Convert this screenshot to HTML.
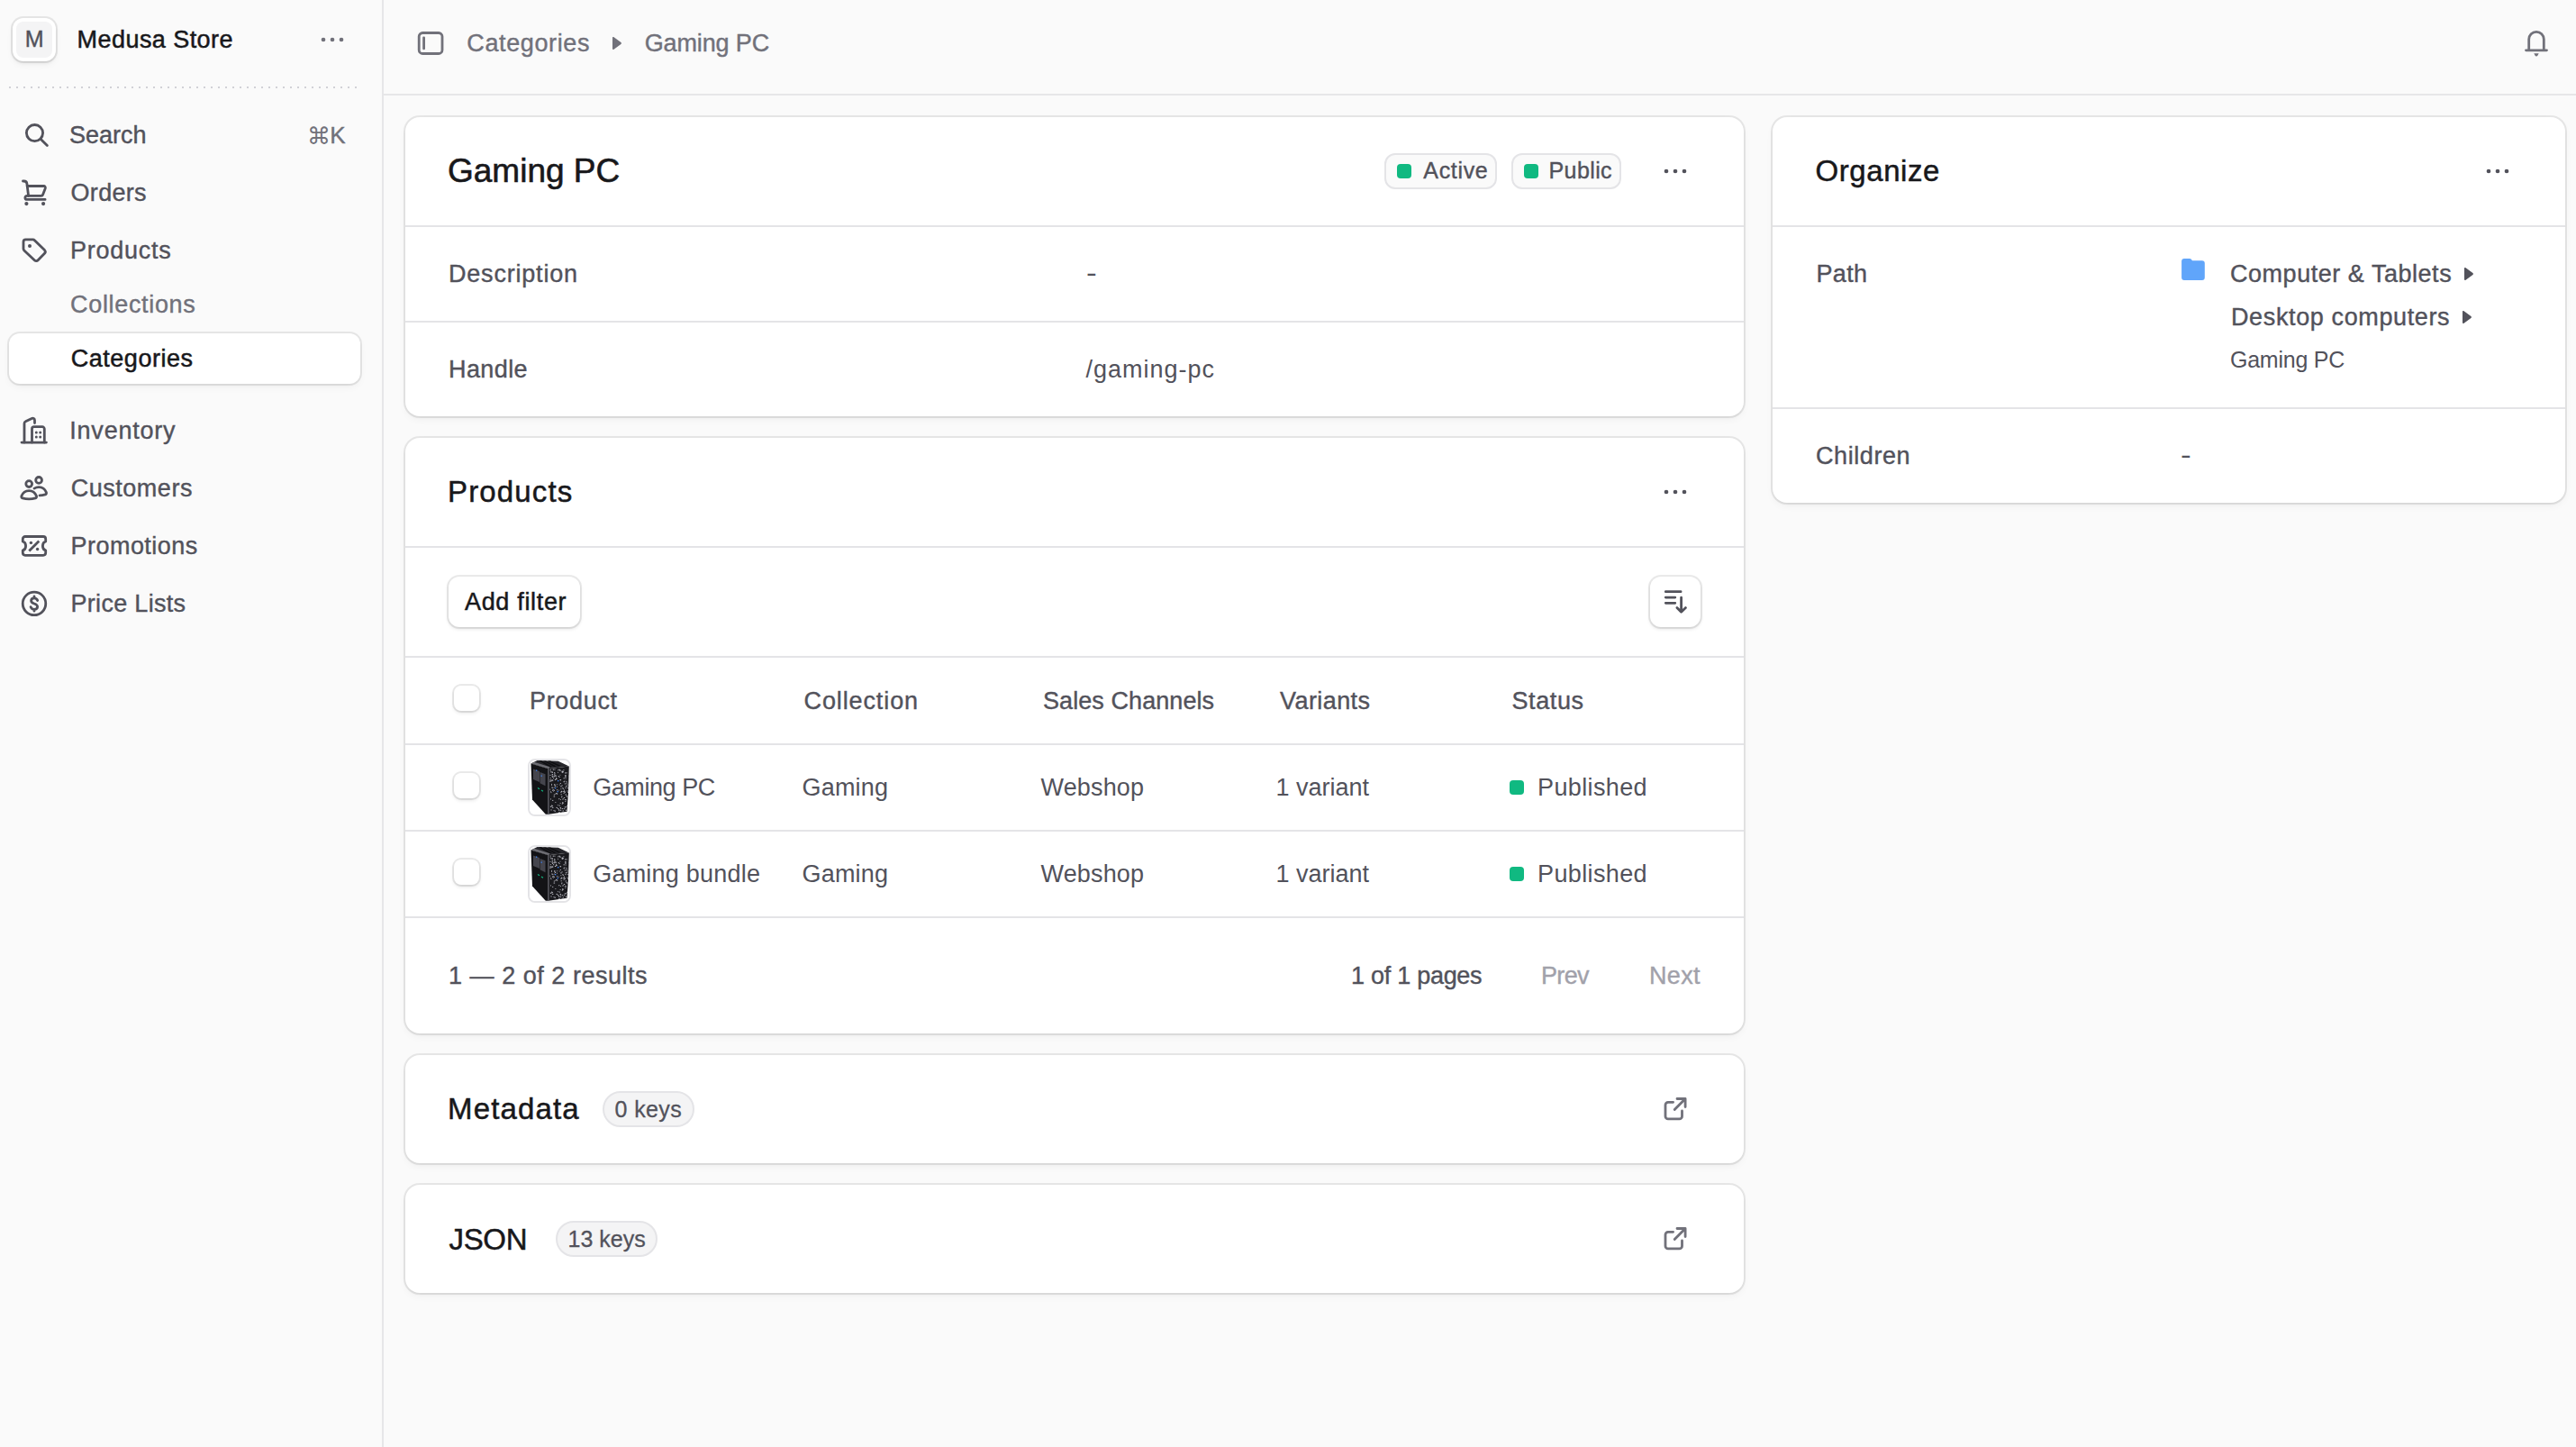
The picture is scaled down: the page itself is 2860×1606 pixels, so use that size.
<!DOCTYPE html>
<html lang="en"><head><meta charset="utf-8"><title>Gaming PC - Categories - Medusa Store</title><meta name="viewport" content="width=2860"><style>
*{box-sizing:border-box;margin:0;padding:0}
html,body{width:2860px;height:1606px;overflow:hidden;background:#fafafa}
body{font-family:"Liberation Sans","DejaVu Sans",sans-serif;position:relative;-webkit-font-smoothing:antialiased}
a{text-decoration:none;color:inherit;display:block}
.t{position:absolute;white-space:pre;display:block}
.ic,.pc{position:absolute;display:block;overflow:visible}
i.sq{position:absolute;width:16px;height:16px;border-radius:4px;background:#10b981}
.sidebar{position:absolute;left:0;top:0;width:426px;height:1606px;border-right:2px solid #e6e6e8;background:#fafafa}
.sidebar div,.sidebar a,.sidebar nav{position:static}
.sidebar .avatar{position:absolute;background:#fff;border-radius:12px;box-shadow:0 0 0 2px rgba(0,0,0,.08),0 2px 4px -1px rgba(0,0,0,.12),0 4px 8px rgba(0,0,0,.04)}
.sidebar .avatar-in{position:absolute;left:4px;top:4px;width:40px;height:40px;border-radius:8px;background:#f4f4f5}
.dots{position:absolute!important;left:10px;top:96px;width:386px;height:2px;background-image:linear-gradient(90deg,#d1d1d6 2px,transparent 2px);background-size:8px 2px}
.sidebar a.active{position:absolute;background:#fff;border-radius:12px;box-shadow:0 0 0 2px rgba(0,0,0,.08),0 2px 4px -2px rgba(0,0,0,.08),0 4px 8px rgba(0,0,0,.04)}
.topbar{position:static;display:block}
.topbar::after{content:"";position:absolute;left:426px;top:104px;width:2434px;height:2px;background:#e6e6e8}
main{position:static}
.card{position:absolute;background:#fff;border-radius:16px;box-shadow:0 0 0 2px rgba(0,0,0,.08),0 2px 4px -2px rgba(0,0,0,.08),0 4px 8px rgba(0,0,0,.04)}
.row{position:absolute;left:0;width:100%;top:0;border-bottom:2px solid #e4e4e7;box-sizing:content-box}
.badge{position:absolute;border:2px solid #e4e4e7;background:#fafafa;border-radius:12px}
.pill{position:absolute;border:2px solid #e4e4e7;background:#f4f4f5;border-radius:20px}
.btn{position:absolute;background:#fff;border-radius:12px;box-shadow:0 0 0 2px rgba(0,0,0,.08),0 2px 4px rgba(0,0,0,.12)}
.cb{position:absolute;background:#fff;border-radius:8px;box-shadow:0 0 0 2px rgba(0,0,0,.08),0 2px 4px rgba(0,0,0,.12)}
.thumb{position:absolute;border:2px solid #e4e4e7;border-radius:8px;overflow:hidden;background:#fff}
.thumb .pc{left:0;top:0}
@media (max-width:1500px){html{width:1430px;height:803px}body{zoom:.5}}
</style></head><body>
<aside class="sidebar">
<div class="store">
<div class="avatar" style="left:14px;top:20px;width:48px;height:48px;"><div class="avatar-in"></div></div>
<span class="t" id="t1" style="left:27.80px;top:26.20px;font-size:25px;line-height:35px;color:#52525b;letter-spacing:0.000px;-webkit-text-stroke:0.4px #52525b;">M</span>
<span class="t" id="t2" style="left:85.60px;top:24.80px;font-size:27px;line-height:38px;color:#18181b;letter-spacing:0.439px;-webkit-text-stroke:0.5px #18181b;">Medusa Store</span>
<svg class="ic" style="left:354px;top:29px;color:#71717a" width="30" height="30" viewBox="0 0 30 30" fill="none" stroke="currentColor" stroke-width="2.8" stroke-linecap="round" stroke-linejoin="round"><circle cx="5" cy="15" r="2.35" fill="currentColor" stroke="none"/><circle cx="15" cy="15" r="2.35" fill="currentColor" stroke="none"/><circle cx="25" cy="15" r="2.35" fill="currentColor" stroke="none"/></svg>
</div>
<div class="dots"></div>
<nav>
<div class="navrow">
<svg class="ic" style="left:20px;top:130px;color:#52525b" width="40" height="40" viewBox="0 0 40 40" fill="none" stroke="currentColor" stroke-width="2.8" stroke-linecap="round" stroke-linejoin="round"><circle cx="18.5" cy="17.6" r="9.1"/><path d="M25.3 24.4 32.4 31.5"/></svg>
<span class="t" id="t3" style="left:77.00px;top:130.80px;font-size:27px;line-height:38px;color:#52525b;letter-spacing:0.000px;-webkit-text-stroke:0.4px #52525b;">Search</span>
<span class="t" id="t4" style="left:340.90px;top:132.80px;font-size:26px;line-height:36px;color:#71717a;letter-spacing:0.000px;font-family:'DejaVu Sans',sans-serif;">⌘</span>
<span class="t" id="t5" style="left:366.20px;top:131.80px;font-size:26px;line-height:36px;color:#71717a;letter-spacing:0.000px;-webkit-text-stroke:0.4px #71717a;">K</span>
</div>
<a class="navrow">
<svg class="ic" style="left:20px;top:194px;color:#52525b" width="40" height="40" viewBox="0 0 40 40" fill="none" stroke="currentColor" stroke-width="2.8" stroke-linecap="round" stroke-linejoin="round"><path d="M5.5 7h1.2a3.2 3.2 0 0 1 3.2 2.8L11.6 23.4"/><path d="M10.2 12.5H28.6a1.8 1.8 0 0 1 1.7 2.4L27.6 22a2 2 0 0 1-1.9 1.4H9.9a2 2 0 0 0 0 4H30.1"/><circle cx="9.4" cy="32.1" r="2.1" fill="currentColor" stroke="none"/><circle cx="28.1" cy="32.1" r="2.1" fill="currentColor" stroke="none"/></svg>
<span class="t" id="t6" style="left:78.50px;top:194.80px;font-size:27px;line-height:38px;color:#52525b;letter-spacing:0.320px;-webkit-text-stroke:0.4px #52525b;">Orders</span>
</a>
<a class="navrow">
<svg class="ic" style="left:20px;top:258px;color:#52525b" width="40" height="40" viewBox="0 0 40 40" fill="none" stroke="currentColor" stroke-width="2.8" stroke-linecap="round" stroke-linejoin="round"><path d="M6 10.4a2.5 2.5 0 0 1 2.5-2.5h8.1a2.5 2.5 0 0 1 1.8.75L29.5 19.6a2.6 2.6 0 0 1 0 3.6l-7.3 7.6a2.6 2.6 0 0 1-3.7.1L6.8 19.9a2.5 2.5 0 0 1-.8-1.8z"/><circle cx="13" cy="15" r="2" fill="currentColor" stroke="none"/></svg>
<span class="t" id="t7" style="left:77.90px;top:258.80px;font-size:27px;line-height:38px;color:#52525b;letter-spacing:0.772px;-webkit-text-stroke:0.4px #52525b;">Products</span>
</a>
<a class="navrow"><span class="t" id="t8" style="left:78.10px;top:318.80px;font-size:27px;line-height:38px;color:#71717a;letter-spacing:0.660px;-webkit-text-stroke:0.4px #71717a;">Collections</span></a>
<a class="active" style="left:10px;top:370px;width:390px;height:56px;"><span class="t" id="t9" style="left:68.70px;top:8.80px;font-size:27px;line-height:38px;color:#18181b;letter-spacing:0.534px;-webkit-text-stroke:0.5px #18181b;">Categories</span></a>
<a class="navrow">
<svg class="ic" style="left:20px;top:458px;color:#52525b" width="40" height="40" viewBox="0 0 40 40" fill="none" stroke="currentColor" stroke-width="2.8" stroke-linecap="round" stroke-linejoin="round"><path d="M4 33.1H31.4"/><path d="M7 33.1V12a2.4 2.4 0 0 1 1.4-2.2l6.8-3.4a2.3 2.3 0 0 1 3.3 2.1v3.1"/><path d="M15.5 33.1V18a2.3 2.3 0 0 1 2.3-2.3H27a2.3 2.3 0 0 1 2.3 2.3V33.1"/><circle cx="20.3" cy="21.9" r="1.5" fill="currentColor" stroke="none"/><circle cx="24.7" cy="21.9" r="1.5" fill="currentColor" stroke="none"/><circle cx="20.3" cy="27" r="1.5" fill="currentColor" stroke="none"/><circle cx="24.7" cy="27" r="1.5" fill="currentColor" stroke="none"/></svg>
<span class="t" id="t10" style="left:77.30px;top:458.80px;font-size:27px;line-height:38px;color:#52525b;letter-spacing:0.775px;-webkit-text-stroke:0.4px #52525b;">Inventory</span>
</a>
<a class="navrow">
<svg class="ic" style="left:20px;top:523px;color:#52525b" width="40" height="40" viewBox="0 0 40 40" fill="none" stroke="currentColor" stroke-width="2.8" stroke-linecap="round" stroke-linejoin="round"><circle cx="12.2" cy="14.1" r="3.4"/><circle cx="23.1" cy="9.9" r="3.4"/><path d="M12.2 21.6c-3.9 0-7 2.6-8.3 6-.4 1 .2 2 1.2 2.3 2 .6 4.4 1 7.1 1s5.1-.4 7.1-1c1-.3 1.6-1.3 1.2-2.3-1.300-3.400-4.400-6-8.300-6z"/><path d="M18 19.1c1.500-.900 3.200-1.500 5.100-1.500 3.900 0 7 2.600 8.300 6 .4 1-.2 2-1.200 2.300-1.800.5-3.800.9-6.200 1"/></svg>
<span class="t" id="t11" style="left:78.70px;top:522.80px;font-size:27px;line-height:38px;color:#52525b;letter-spacing:0.526px;-webkit-text-stroke:0.4px #52525b;">Customers</span>
</a>
<a class="navrow">
<svg class="ic" style="left:20px;top:587px;color:#52525b" width="40" height="40" viewBox="0 0 40 40" fill="none" stroke="currentColor" stroke-width="2.8" stroke-linecap="round" stroke-linejoin="round"><path d="M8 8.500H28a2.700 2.700 0 0 1 2.700 2.700V14c-2.500.6-3.300 2.800-3.300 4.900s.8 4.300 3.300 4.900v2.800a2.700 2.700 0 0 1-2.700 2.700H8a2.700 2.700 0 0 1-2.700-2.700V23.800c2.500-.6 3.300-2.800 3.300-4.900s-.8-4.300-3.300-4.900V11.200A2.700 2.700 0 0 1 8 8.500z"/><path d="M13.300 23.400 22.300 14.400" stroke-linecap="square"/><circle cx="14.400" cy="15.400" r="1.700" fill="currentColor" stroke="none"/><circle cx="21.600" cy="22.500" r="1.700" fill="currentColor" stroke="none"/></svg>
<span class="t" id="t12" style="left:78.50px;top:586.80px;font-size:27px;line-height:38px;color:#52525b;letter-spacing:0.468px;-webkit-text-stroke:0.4px #52525b;">Promotions</span>
</a>
<a class="navrow">
<svg class="ic" style="left:20px;top:651px;color:#52525b" width="40" height="40" viewBox="0 0 40 40" fill="none" stroke="currentColor" stroke-width="2.8" stroke-linecap="round" stroke-linejoin="round"><circle cx="18" cy="18.900" r="12.750"/><path d="M21.700 15.500c-.6-1.700-2-2.600-3.700-2.600-2 0-3.400 1.200-3.400 2.900 0 1.900 1.500 2.600 3.400 3.200s3.600 1.300 3.600 3.300c0 1.800-1.500 3-3.600 3-1.800 0-3.300-.9-3.900-2.700M18 11v1.900M18 25.300v1.900"/></svg>
<span class="t" id="t13" style="left:78.50px;top:650.80px;font-size:27px;line-height:38px;color:#52525b;letter-spacing:0.300px;-webkit-text-stroke:0.4px #52525b;">Price Lists</span>
</a>
</nav>
</aside>
<header class="topbar">
<svg class="ic" style="left:460px;top:30px;color:#71717a" width="36" height="36" viewBox="0 0 36 36" fill="none" stroke="currentColor" stroke-width="2.8" stroke-linecap="round" stroke-linejoin="round"><rect x="5.200" y="6.500" width="25.800" height="23" rx="4"/><path d="M10.600 11.800V23.900"/></svg>
<span class="t" id="t14" style="left:518.30px;top:28.80px;font-size:27px;line-height:38px;color:#71717a;letter-spacing:0.621px;-webkit-text-stroke:0.4px #71717a;">Categories</span>
<svg class="ic" style="left:680px;top:39.8px;color:#71717a" width="11" height="16" viewBox="0 0 11 16" fill="none" stroke="currentColor" stroke-width="2.8" stroke-linecap="round" stroke-linejoin="round"><path d="M1.6 1.2 9.4 7.1a1.1 1.1 0 0 1 0 1.800L1.600 14.800A1 1 0 0 1 0 14V2A1 1 0 0 1 1.600 1.200z" fill="currentColor" stroke="none"/></svg>
<span class="t" id="t15" style="left:715.70px;top:28.80px;font-size:27px;line-height:38px;color:#71717a;letter-spacing:-0.126px;-webkit-text-stroke:0.4px #71717a;">Gaming PC</span>
<svg class="ic" style="left:2796px;top:28px;color:#71717a" width="40" height="40" viewBox="0 0 40 40" fill="none" stroke="currentColor" stroke-width="2.8" stroke-linecap="round" stroke-linejoin="round"><path d="M8.500 27.800H31.500M11.700 27.800V15.600a8.300 8.300 0 0 1 16.600 0V27.800"/><path d="M17.300 31.300h5.400l-1.200 2.200a1.700 1.700 0 0 1-3 0z" fill="currentColor" stroke="none"/></svg>
</header>
<main>
<section class="card" style="left:450px;top:130px;width:1486px;height:332px">
<div class="row hd" style="height:120px">
<span class="t" id="t16" style="left:47.00px;top:34.30px;font-size:37px;line-height:52px;color:#18181b;letter-spacing:0.000px;-webkit-text-stroke:0.6px #18181b;">Gaming PC</span>
<div class="badge" style="left:1087px;top:40px;width:125px;height:40px;"><i class="sq" style="left:12px;top:10px"></i><span class="t" id="t17" style="left:41.30px;top:0.10px;font-size:25px;line-height:35px;color:#52525b;letter-spacing:0.680px;-webkit-text-stroke:0.4px #52525b;">Active</span></div>
<div class="badge" style="left:1228px;top:40px;width:121.5px;height:40px;"><i class="sq" style="left:12px;top:10px"></i><span class="t" id="t18" style="left:39.50px;top:0.10px;font-size:25px;line-height:35px;color:#52525b;letter-spacing:0.400px;-webkit-text-stroke:0.4px #52525b;">Public</span></div>
<svg class="ic" style="left:1395px;top:45px;color:#52525b" width="30" height="30" viewBox="0 0 30 30" fill="none" stroke="currentColor" stroke-width="2.8" stroke-linecap="round" stroke-linejoin="round"><circle cx="5" cy="15" r="2.35" fill="currentColor" stroke="none"/><circle cx="15" cy="15" r="2.35" fill="currentColor" stroke="none"/><circle cx="25" cy="15" r="2.35" fill="currentColor" stroke="none"/></svg>
</div>
<div class="row" style="top:122px;height:104px">
<span class="t" id="t19" style="left:48.00px;top:32.80px;font-size:27px;line-height:38px;color:#52525b;letter-spacing:0.800px;-webkit-text-stroke:0.4px #52525b;">Description</span>
<span class="t" id="t20" style="left:755.70px;top:32.30px;font-size:27px;line-height:38px;color:#52525b;letter-spacing:0.000px;transform:scaleX(1.3);transform-origin:0 50%;">-</span>
</div>
<div class="row" style="top:228px;height:104px;border-bottom:0">
<span class="t" id="t21" style="left:48.00px;top:32.80px;font-size:27px;line-height:38px;color:#52525b;letter-spacing:0.400px;-webkit-text-stroke:0.4px #52525b;">Handle</span>
<span class="t" id="t22" style="left:755.50px;top:32.80px;font-size:27px;line-height:38px;color:#52525b;letter-spacing:1.000px;">/gaming-pc</span>
</div>
</section>
<section class="card" style="left:450px;top:486px;width:1486px;height:661px">
<div class="row hd" style="height:120px">
<span class="t" id="t23" style="left:47.00px;top:36.80px;font-size:33px;line-height:46px;color:#18181b;letter-spacing:1.143px;-webkit-text-stroke:0.5px #18181b;">Products</span>
<svg class="ic" style="left:1395px;top:44.5px;color:#52525b" width="30" height="30" viewBox="0 0 30 30" fill="none" stroke="currentColor" stroke-width="2.8" stroke-linecap="round" stroke-linejoin="round"><circle cx="5" cy="15" r="2.35" fill="currentColor" stroke="none"/><circle cx="15" cy="15" r="2.35" fill="currentColor" stroke="none"/><circle cx="25" cy="15" r="2.35" fill="currentColor" stroke="none"/></svg>
</div>
<div class="row" style="top:122px;height:120px">
<div class="btn" style="left:48px;top:32px;width:146px;height:56px;"><span class="t" id="t24" style="left:18.00px;top:8.80px;font-size:27px;line-height:38px;color:#18181b;letter-spacing:0.667px;-webkit-text-stroke:0.5px #18181b;">Add filter</span></div>
<div class="btn" style="left:1382px;top:32px;width:56px;height:56px;"><svg class="ic" style="left:13px;top:13px;color:#52525b" width="30" height="30" viewBox="0 0 30 30" fill="none" stroke="currentColor" stroke-width="2.8" stroke-linecap="round" stroke-linejoin="round"><path d="M4.300 3.700H21.100M4.300 10.100H14.800M4.300 16.300H14.800M21.600 10.200V26.200M16.900 21.600l4.700 4.700 4.900-4.700"/></svg></div>
</div>
<div class="row th" style="top:244px;height:95px">
<div class="cb" style="left:54px;top:31px;width:28px;height:28px;"></div>
<span class="t" id="t25" style="left:138.00px;top:28.80px;font-size:27px;line-height:38px;color:#52525b;letter-spacing:0.667px;-webkit-text-stroke:0.4px #52525b;">Product</span>
<span class="t" id="t26" style="left:442.50px;top:28.80px;font-size:27px;line-height:38px;color:#52525b;letter-spacing:0.889px;-webkit-text-stroke:0.4px #52525b;">Collection</span>
<span class="t" id="t27" style="left:708.00px;top:28.80px;font-size:27px;line-height:38px;color:#52525b;letter-spacing:0.077px;-webkit-text-stroke:0.4px #52525b;">Sales Channels</span>
<span class="t" id="t28" style="left:971.00px;top:28.80px;font-size:27px;line-height:38px;color:#52525b;letter-spacing:0.429px;-webkit-text-stroke:0.4px #52525b;">Variants</span>
<span class="t" id="t29" style="left:1228.50px;top:28.80px;font-size:27px;line-height:38px;color:#52525b;letter-spacing:0.600px;-webkit-text-stroke:0.4px #52525b;">Status</span>
</div>
<div class="row tr" style="top:341px;height:94px">
<div class="cb" style="left:54px;top:31px;width:28px;height:28px;"></div>
<div class="thumb" style="left:136px;top:15px;width:48px;height:64px;"><svg class="pc" width="44" height="60" viewBox="0 0 44 60"><rect width="44" height="60" fill="#fff"/><path d="M1.500 3.500 8.500 0 31.800.8 43.800 6.600 20.900 9.300z" fill="#26262b"/><path d="M10 .3l3 0 12 6.500-3 .4zM15 .4l3 .1 12 6-3 .4zM20 .5l3 .1 12 5.500-3 .4z" fill="#0e0e11"/><path d="M1.500 3.500 5 1.700 22.600 7.300 20.900 9.300z" fill="#6e6e74"/><path d="M1.500 3.500 20.900 9.300V59.800H17.800L3 43.500z" fill="#131316"/><path d="M20.900 9.300 43.800 6.600 43 35.700 41.500 56.700 20.900 59.800z" fill="#1a1a1e"/><path d="M20.900 9.300V59.800" stroke="#5c5c63" stroke-width="1.400"/><path d="M4 9.500l7 2.500v12l-7-3zM11.500 13l6 2.200v13l-6-3z" fill="#45454d"/><path d="M9 30.500l2 1.200M13 33l2 1.200" stroke="#10b981" stroke-width="1.200"/><clipPath id="pcf0"><path d="M21.600 9.200 43.800 6.600 43 35.700 41.500 56.700 21.600 59.700z"/></clipPath><g fill="#c4c4cc" clip-path="url(#pcf0)"><rect x="28.8" y="16.7" width="1.2" height=".9"/><rect x="23.4" y="35.2" width="1.0" height=".9"/><rect x="23.0" y="33.9" width="0.7" height=".9"/><rect x="31.1" y="12.9" width="0.8" height=".9"/><rect x="30.9" y="49.2" width="0.8" height=".9"/><rect x="26.6" y="39.6" width="1.5" height=".9"/><rect x="34.2" y="28.5" width="1.5" height=".9"/><rect x="22.8" y="50.7" width="0.9" height=".9"/><rect x="24.9" y="15.2" width="0.9" height=".9"/><rect x="39.3" y="18.2" width="1.2" height=".9"/><rect x="35.5" y="27.4" width="1.1" height=".9"/><rect x="23.1" y="12.4" width="0.9" height=".9"/><rect x="36.4" y="30.0" width="1.0" height=".9"/><rect x="34.4" y="31.3" width="0.9" height=".9"/><rect x="38.9" y="43.1" width="0.9" height=".9"/><rect x="34.2" y="34.7" width="1.4" height=".9"/><rect x="37.5" y="23.3" width="1.5" height=".9"/><rect x="24.3" y="29.6" width="1.3" height=".9"/><rect x="25.1" y="33.0" width="0.7" height=".9"/><rect x="36.2" y="46.2" width="1.2" height=".9"/><rect x="40.6" y="24.6" width="1.3" height=".9"/><rect x="34.6" y="37.3" width="1.1" height=".9"/><rect x="39.9" y="54.8" width="1.1" height=".9"/><rect x="36.1" y="12.4" width="1.3" height=".9"/><rect x="35.7" y="57.2" width="1.4" height=".9"/><rect x="27.9" y="28.0" width="1.2" height=".9"/><rect x="22.3" y="31.7" width="0.8" height=".9"/><rect x="24.3" y="12.3" width="1.3" height=".9"/><rect x="24.6" y="21.4" width="1.0" height=".9"/><rect x="40.5" y="13.4" width="1.1" height=".9"/><rect x="33.6" y="51.9" width="1.4" height=".9"/><rect x="40.4" y="22.9" width="1.0" height=".9"/><rect x="29.5" y="51.9" width="1.5" height=".9"/><rect x="25.0" y="18.0" width="0.9" height=".9"/><rect x="26.8" y="32.8" width="1.2" height=".9"/><rect x="27.4" y="9.7" width="1.0" height=".9"/><rect x="29.7" y="36.7" width="1.5" height=".9"/><rect x="36.6" y="34.2" width="1.2" height=".9"/><rect x="36.3" y="12.1" width="1.4" height=".9"/><rect x="38.6" y="51.5" width="1.3" height=".9"/><rect x="30.2" y="28.7" width="0.8" height=".9"/><rect x="35.4" y="12.5" width="0.8" height=".9"/><rect x="26.3" y="17.3" width="1.0" height=".9"/><rect x="22.9" y="9.5" width="0.8" height=".9"/><rect x="24.0" y="27.0" width="0.7" height=".9"/><rect x="40.6" y="39.0" width="0.8" height=".9"/><rect x="27.2" y="26.2" width="1.0" height=".9"/><rect x="24.4" y="50.2" width="1.5" height=".9"/><rect x="31.8" y="32.7" width="0.8" height=".9"/><rect x="24.0" y="25.9" width="0.9" height=".9"/><rect x="39.6" y="17.2" width="0.7" height=".9"/><rect x="42.2" y="34.9" width="0.8" height=".9"/><rect x="33.5" y="10.8" width="1.1" height=".9"/><rect x="42.8" y="50.9" width="1.3" height=".9"/><rect x="27.4" y="27.1" width="0.8" height=".9"/><rect x="38.4" y="35.1" width="1.3" height=".9"/><rect x="28.9" y="20.2" width="1.3" height=".9"/><rect x="43.0" y="50.4" width="1.3" height=".9"/><rect x="39.4" y="45.0" width="0.9" height=".9"/><rect x="32.9" y="26.6" width="0.7" height=".9"/><rect x="22.4" y="22.9" width="0.9" height=".9"/><rect x="36.7" y="55.4" width="1.1" height=".9"/><rect x="41.9" y="56.9" width="1.5" height=".9"/><rect x="29.6" y="20.1" width="0.9" height=".9"/><rect x="26.0" y="19.3" width="1.2" height=".9"/><rect x="41.2" y="49.8" width="1.1" height=".9"/><rect x="35.8" y="47.9" width="0.8" height=".9"/><rect x="36.0" y="53.2" width="1.3" height=".9"/><rect x="37.9" y="32.4" width="0.8" height=".9"/><rect x="38.8" y="25.5" width="1.3" height=".9"/><rect x="42.7" y="28.5" width="1.0" height=".9"/><rect x="42.2" y="44.3" width="0.8" height=".9"/><rect x="24.5" y="16.8" width="1.4" height=".9"/><rect x="39.1" y="16.5" width="1.4" height=".9"/><rect x="42.9" y="41.0" width="1.0" height=".9"/><rect x="33.6" y="15.8" width="0.7" height=".9"/><rect x="42.7" y="40.7" width="1.1" height=".9"/><rect x="41.9" y="30.3" width="1.4" height=".9"/><rect x="39.6" y="19.6" width="0.9" height=".9"/><rect x="28.1" y="21.0" width="1.2" height=".9"/><rect x="27.4" y="29.6" width="0.8" height=".9"/><rect x="41.4" y="26.5" width="1.1" height=".9"/><rect x="34.3" y="52.9" width="1.0" height=".9"/><rect x="41.5" y="33.6" width="1.1" height=".9"/><rect x="33.1" y="10.4" width="1.1" height=".9"/><rect x="25.7" y="9.7" width="1.3" height=".9"/><rect x="25.5" y="32.2" width="1.3" height=".9"/><rect x="33.8" y="25.1" width="1.1" height=".9"/><rect x="33.7" y="47.1" width="0.8" height=".9"/><rect x="33.8" y="21.4" width="0.9" height=".9"/><rect x="38.4" y="33.9" width="1.1" height=".9"/><rect x="38.1" y="53.3" width="1.1" height=".9"/><rect x="35.0" y="33.8" width="1.1" height=".9"/><rect x="36.7" y="31.2" width="1.1" height=".9"/><rect x="32.1" y="54.7" width="1.3" height=".9"/><rect x="40.6" y="54.7" width="0.9" height=".9"/><rect x="33.8" y="54.8" width="1.4" height=".9"/><rect x="24.7" y="15.3" width="1.1" height=".9"/><rect x="23.4" y="21.1" width="0.8" height=".9"/><rect x="36.2" y="47.1" width="1.4" height=".9"/><rect x="25.1" y="43.9" width="1.2" height=".9"/><rect x="24.9" y="51.9" width="1.5" height=".9"/><rect x="26.5" y="55.2" width="1.0" height=".9"/><rect x="32.3" y="57.0" width="1.4" height=".9"/><rect x="25.3" y="30.2" width="1.1" height=".9"/><rect x="29.1" y="18.9" width="1.0" height=".9"/><rect x="37.3" y="10.4" width="1.1" height=".9"/><rect x="31.3" y="10.4" width="1.0" height=".9"/><rect x="35.2" y="34.1" width="0.8" height=".9"/><rect x="43.0" y="47.3" width="1.5" height=".9"/><rect x="24.1" y="22.2" width="0.7" height=".9"/><rect x="38.5" y="22.5" width="0.8" height=".9"/><rect x="30.9" y="53.2" width="1.4" height=".9"/><rect x="27.4" y="16.7" width="1.4" height=".9"/><rect x="34.1" y="43.1" width="0.8" height=".9"/><rect x="23.0" y="42.5" width="1.0" height=".9"/><rect x="23.4" y="54.5" width="1.2" height=".9"/><rect x="39.0" y="13.5" width="1.4" height=".9"/><rect x="23.2" y="50.9" width="1.1" height=".9"/><rect x="29.1" y="36.0" width="1.4" height=".9"/><rect x="27.6" y="15.7" width="1.1" height=".9"/><rect x="26.9" y="14.8" width="0.8" height=".9"/><rect x="22.9" y="19.2" width="0.9" height=".9"/><rect x="28.4" y="46.0" width="0.9" height=".9"/><rect x="32.6" y="18.0" width="1.0" height=".9"/><rect x="22.2" y="21.5" width="0.7" height=".9"/><rect x="37.6" y="36.0" width="0.9" height=".9"/><rect x="32.0" y="54.4" width="0.8" height=".9"/><rect x="39.4" y="30.2" width="1.1" height=".9"/><rect x="39.7" y="28.4" width="1.1" height=".9"/><rect x="36.6" y="56.7" width="1.0" height=".9"/><rect x="39.7" y="43.4" width="1.2" height=".9"/><rect x="30.5" y="26.2" width="0.7" height=".9"/><rect x="24.6" y="12.9" width="1.3" height=".9"/><rect x="27.3" y="17.3" width="0.8" height=".9"/><rect x="39.9" y="51.3" width="1.2" height=".9"/><rect x="27.9" y="21.1" width="0.9" height=".9"/><rect x="31.7" y="17.1" width="1.1" height=".9"/><rect x="27.5" y="55.7" width="1.5" height=".9"/><rect x="33.6" y="21.2" width="1.5" height=".9"/><rect x="28.5" y="26.6" width="0.7" height=".9"/><rect x="30.0" y="32.3" width="1.1" height=".9"/><rect x="26.1" y="33.7" width="0.7" height=".9"/><rect x="27.5" y="13.8" width="1.0" height=".9"/><rect x="22.7" y="10.6" width="0.9" height=".9"/><rect x="26.8" y="37.6" width="1.1" height=".9"/><rect x="37.9" y="41.1" width="1.3" height=".9"/><rect x="40.7" y="28.2" width="1.0" height=".9"/><rect x="43.0" y="16.7" width="1.3" height=".9"/><rect x="35.6" y="11.6" width="1.4" height=".9"/><rect x="41.0" y="39.6" width="1.3" height=".9"/><rect x="39.3" y="16.2" width="1.1" height=".9"/><rect x="32.6" y="49.6" width="1.3" height=".9"/><rect x="39.6" y="37.5" width="1.4" height=".9"/><rect x="36.5" y="42.8" width="0.9" height=".9"/><rect x="22.5" y="15.9" width="1.0" height=".9"/><rect x="24.1" y="49.6" width="1.1" height=".9"/><rect x="35.3" y="39.6" width="1.2" height=".9"/><rect x="32.3" y="9.7" width="1.3" height=".9"/><rect x="37.9" y="33.6" width="1.1" height=".9"/><rect x="36.0" y="12.7" width="1.3" height=".9"/><rect x="27.2" y="13.1" width="0.9" height=".9"/><rect x="37.5" y="19.4" width="1.3" height=".9"/><rect x="42.8" y="33.2" width="1.0" height=".9"/><rect x="32.1" y="42.3" width="1.3" height=".9"/><rect x="35.1" y="40.4" width="0.8" height=".9"/><rect x="25.0" y="21.7" width="1.3" height=".9"/><rect x="28.3" y="36.8" width="0.7" height=".9"/><rect x="23.1" y="22.4" width="1.2" height=".9"/><rect x="36.7" y="41.9" width="0.9" height=".9"/></g><g fill="#3b82f6"><rect x="31" y="22" width="1.300" height="1.300"/><rect x="28" y="30" width="1.300" height="1.300"/><rect x="30.500" y="34" width="1.300" height="1.300"/><rect x="7" y="10.500" width="1.300" height="1.300"/><rect x="12.500" y="16.500" width="1.300" height="1.300"/></g></svg></div>
<span class="t" id="t30" style="left:208.20px;top:28.30px;font-size:27px;line-height:38px;color:#52525b;letter-spacing:-0.425px;">Gaming PC</span>
<span class="t" id="t31" style="left:440.50px;top:28.30px;font-size:27px;line-height:38px;color:#52525b;letter-spacing:0.200px;">Gaming</span>
<span class="t" id="t32" style="left:705.50px;top:28.30px;font-size:27px;line-height:38px;color:#52525b;letter-spacing:0.166px;">Webshop</span>
<span class="t" id="t33" style="left:966.50px;top:28.30px;font-size:27px;line-height:38px;color:#52525b;letter-spacing:0.001px;">1 variant</span>
<i class="sq" style="left:1226px;top:39px"></i>
<span class="t" id="t34" style="left:1257.00px;top:28.30px;font-size:27px;line-height:38px;color:#52525b;letter-spacing:0.375px;">Published</span>
</div>
<div class="row tr" style="top:437px;height:94px">
<div class="cb" style="left:54px;top:31px;width:28px;height:28px;"></div>
<div class="thumb" style="left:136px;top:15px;width:48px;height:64px;"><svg class="pc" width="44" height="60" viewBox="0 0 44 60"><rect width="44" height="60" fill="#fff"/><path d="M1.500 3.500 8.500 0 31.800.8 43.800 6.600 20.900 9.300z" fill="#26262b"/><path d="M10 .3l3 0 12 6.500-3 .4zM15 .4l3 .1 12 6-3 .4zM20 .5l3 .1 12 5.500-3 .4z" fill="#0e0e11"/><path d="M1.500 3.500 5 1.700 22.600 7.300 20.900 9.300z" fill="#6e6e74"/><path d="M1.500 3.500 20.900 9.300V59.800H17.800L3 43.500z" fill="#131316"/><path d="M20.900 9.300 43.800 6.600 43 35.700 41.500 56.700 20.900 59.800z" fill="#1a1a1e"/><path d="M20.900 9.300V59.800" stroke="#5c5c63" stroke-width="1.400"/><path d="M4 9.500l7 2.500v12l-7-3zM11.500 13l6 2.200v13l-6-3z" fill="#45454d"/><path d="M9 30.500l2 1.200M13 33l2 1.200" stroke="#10b981" stroke-width="1.200"/><clipPath id="pcf1"><path d="M21.600 9.200 43.800 6.600 43 35.700 41.500 56.700 21.600 59.700z"/></clipPath><g fill="#c4c4cc" clip-path="url(#pcf1)"><rect x="28.8" y="16.7" width="1.2" height=".9"/><rect x="23.4" y="35.2" width="1.0" height=".9"/><rect x="23.0" y="33.9" width="0.7" height=".9"/><rect x="31.1" y="12.9" width="0.8" height=".9"/><rect x="30.9" y="49.2" width="0.8" height=".9"/><rect x="26.6" y="39.6" width="1.5" height=".9"/><rect x="34.2" y="28.5" width="1.5" height=".9"/><rect x="22.8" y="50.7" width="0.9" height=".9"/><rect x="24.9" y="15.2" width="0.9" height=".9"/><rect x="39.3" y="18.2" width="1.2" height=".9"/><rect x="35.5" y="27.4" width="1.1" height=".9"/><rect x="23.1" y="12.4" width="0.9" height=".9"/><rect x="36.4" y="30.0" width="1.0" height=".9"/><rect x="34.4" y="31.3" width="0.9" height=".9"/><rect x="38.9" y="43.1" width="0.9" height=".9"/><rect x="34.2" y="34.7" width="1.4" height=".9"/><rect x="37.5" y="23.3" width="1.5" height=".9"/><rect x="24.3" y="29.6" width="1.3" height=".9"/><rect x="25.1" y="33.0" width="0.7" height=".9"/><rect x="36.2" y="46.2" width="1.2" height=".9"/><rect x="40.6" y="24.6" width="1.3" height=".9"/><rect x="34.6" y="37.3" width="1.1" height=".9"/><rect x="39.9" y="54.8" width="1.1" height=".9"/><rect x="36.1" y="12.4" width="1.3" height=".9"/><rect x="35.7" y="57.2" width="1.4" height=".9"/><rect x="27.9" y="28.0" width="1.2" height=".9"/><rect x="22.3" y="31.7" width="0.8" height=".9"/><rect x="24.3" y="12.3" width="1.3" height=".9"/><rect x="24.6" y="21.4" width="1.0" height=".9"/><rect x="40.5" y="13.4" width="1.1" height=".9"/><rect x="33.6" y="51.9" width="1.4" height=".9"/><rect x="40.4" y="22.9" width="1.0" height=".9"/><rect x="29.5" y="51.9" width="1.5" height=".9"/><rect x="25.0" y="18.0" width="0.9" height=".9"/><rect x="26.8" y="32.8" width="1.2" height=".9"/><rect x="27.4" y="9.7" width="1.0" height=".9"/><rect x="29.7" y="36.7" width="1.5" height=".9"/><rect x="36.6" y="34.2" width="1.2" height=".9"/><rect x="36.3" y="12.1" width="1.4" height=".9"/><rect x="38.6" y="51.5" width="1.3" height=".9"/><rect x="30.2" y="28.7" width="0.8" height=".9"/><rect x="35.4" y="12.5" width="0.8" height=".9"/><rect x="26.3" y="17.3" width="1.0" height=".9"/><rect x="22.9" y="9.5" width="0.8" height=".9"/><rect x="24.0" y="27.0" width="0.7" height=".9"/><rect x="40.6" y="39.0" width="0.8" height=".9"/><rect x="27.2" y="26.2" width="1.0" height=".9"/><rect x="24.4" y="50.2" width="1.5" height=".9"/><rect x="31.8" y="32.7" width="0.8" height=".9"/><rect x="24.0" y="25.9" width="0.9" height=".9"/><rect x="39.6" y="17.2" width="0.7" height=".9"/><rect x="42.2" y="34.9" width="0.8" height=".9"/><rect x="33.5" y="10.8" width="1.1" height=".9"/><rect x="42.8" y="50.9" width="1.3" height=".9"/><rect x="27.4" y="27.1" width="0.8" height=".9"/><rect x="38.4" y="35.1" width="1.3" height=".9"/><rect x="28.9" y="20.2" width="1.3" height=".9"/><rect x="43.0" y="50.4" width="1.3" height=".9"/><rect x="39.4" y="45.0" width="0.9" height=".9"/><rect x="32.9" y="26.6" width="0.7" height=".9"/><rect x="22.4" y="22.9" width="0.9" height=".9"/><rect x="36.7" y="55.4" width="1.1" height=".9"/><rect x="41.9" y="56.9" width="1.5" height=".9"/><rect x="29.6" y="20.1" width="0.9" height=".9"/><rect x="26.0" y="19.3" width="1.2" height=".9"/><rect x="41.2" y="49.8" width="1.1" height=".9"/><rect x="35.8" y="47.9" width="0.8" height=".9"/><rect x="36.0" y="53.2" width="1.3" height=".9"/><rect x="37.9" y="32.4" width="0.8" height=".9"/><rect x="38.8" y="25.5" width="1.3" height=".9"/><rect x="42.7" y="28.5" width="1.0" height=".9"/><rect x="42.2" y="44.3" width="0.8" height=".9"/><rect x="24.5" y="16.8" width="1.4" height=".9"/><rect x="39.1" y="16.5" width="1.4" height=".9"/><rect x="42.9" y="41.0" width="1.0" height=".9"/><rect x="33.6" y="15.8" width="0.7" height=".9"/><rect x="42.7" y="40.7" width="1.1" height=".9"/><rect x="41.9" y="30.3" width="1.4" height=".9"/><rect x="39.6" y="19.6" width="0.9" height=".9"/><rect x="28.1" y="21.0" width="1.2" height=".9"/><rect x="27.4" y="29.6" width="0.8" height=".9"/><rect x="41.4" y="26.5" width="1.1" height=".9"/><rect x="34.3" y="52.9" width="1.0" height=".9"/><rect x="41.5" y="33.6" width="1.1" height=".9"/><rect x="33.1" y="10.4" width="1.1" height=".9"/><rect x="25.7" y="9.7" width="1.3" height=".9"/><rect x="25.5" y="32.2" width="1.3" height=".9"/><rect x="33.8" y="25.1" width="1.1" height=".9"/><rect x="33.7" y="47.1" width="0.8" height=".9"/><rect x="33.8" y="21.4" width="0.9" height=".9"/><rect x="38.4" y="33.9" width="1.1" height=".9"/><rect x="38.1" y="53.3" width="1.1" height=".9"/><rect x="35.0" y="33.8" width="1.1" height=".9"/><rect x="36.7" y="31.2" width="1.1" height=".9"/><rect x="32.1" y="54.7" width="1.3" height=".9"/><rect x="40.6" y="54.7" width="0.9" height=".9"/><rect x="33.8" y="54.8" width="1.4" height=".9"/><rect x="24.7" y="15.3" width="1.1" height=".9"/><rect x="23.4" y="21.1" width="0.8" height=".9"/><rect x="36.2" y="47.1" width="1.4" height=".9"/><rect x="25.1" y="43.9" width="1.2" height=".9"/><rect x="24.9" y="51.9" width="1.5" height=".9"/><rect x="26.5" y="55.2" width="1.0" height=".9"/><rect x="32.3" y="57.0" width="1.4" height=".9"/><rect x="25.3" y="30.2" width="1.1" height=".9"/><rect x="29.1" y="18.9" width="1.0" height=".9"/><rect x="37.3" y="10.4" width="1.1" height=".9"/><rect x="31.3" y="10.4" width="1.0" height=".9"/><rect x="35.2" y="34.1" width="0.8" height=".9"/><rect x="43.0" y="47.3" width="1.5" height=".9"/><rect x="24.1" y="22.2" width="0.7" height=".9"/><rect x="38.5" y="22.5" width="0.8" height=".9"/><rect x="30.9" y="53.2" width="1.4" height=".9"/><rect x="27.4" y="16.7" width="1.4" height=".9"/><rect x="34.1" y="43.1" width="0.8" height=".9"/><rect x="23.0" y="42.5" width="1.0" height=".9"/><rect x="23.4" y="54.5" width="1.2" height=".9"/><rect x="39.0" y="13.5" width="1.4" height=".9"/><rect x="23.2" y="50.9" width="1.1" height=".9"/><rect x="29.1" y="36.0" width="1.4" height=".9"/><rect x="27.6" y="15.7" width="1.1" height=".9"/><rect x="26.9" y="14.8" width="0.8" height=".9"/><rect x="22.9" y="19.2" width="0.9" height=".9"/><rect x="28.4" y="46.0" width="0.9" height=".9"/><rect x="32.6" y="18.0" width="1.0" height=".9"/><rect x="22.2" y="21.5" width="0.7" height=".9"/><rect x="37.6" y="36.0" width="0.9" height=".9"/><rect x="32.0" y="54.4" width="0.8" height=".9"/><rect x="39.4" y="30.2" width="1.1" height=".9"/><rect x="39.7" y="28.4" width="1.1" height=".9"/><rect x="36.6" y="56.7" width="1.0" height=".9"/><rect x="39.7" y="43.4" width="1.2" height=".9"/><rect x="30.5" y="26.2" width="0.7" height=".9"/><rect x="24.6" y="12.9" width="1.3" height=".9"/><rect x="27.3" y="17.3" width="0.8" height=".9"/><rect x="39.9" y="51.3" width="1.2" height=".9"/><rect x="27.9" y="21.1" width="0.9" height=".9"/><rect x="31.7" y="17.1" width="1.1" height=".9"/><rect x="27.5" y="55.7" width="1.5" height=".9"/><rect x="33.6" y="21.2" width="1.5" height=".9"/><rect x="28.5" y="26.6" width="0.7" height=".9"/><rect x="30.0" y="32.3" width="1.1" height=".9"/><rect x="26.1" y="33.7" width="0.7" height=".9"/><rect x="27.5" y="13.8" width="1.0" height=".9"/><rect x="22.7" y="10.6" width="0.9" height=".9"/><rect x="26.8" y="37.6" width="1.1" height=".9"/><rect x="37.9" y="41.1" width="1.3" height=".9"/><rect x="40.7" y="28.2" width="1.0" height=".9"/><rect x="43.0" y="16.7" width="1.3" height=".9"/><rect x="35.6" y="11.6" width="1.4" height=".9"/><rect x="41.0" y="39.6" width="1.3" height=".9"/><rect x="39.3" y="16.2" width="1.1" height=".9"/><rect x="32.6" y="49.6" width="1.3" height=".9"/><rect x="39.6" y="37.5" width="1.4" height=".9"/><rect x="36.5" y="42.8" width="0.9" height=".9"/><rect x="22.5" y="15.9" width="1.0" height=".9"/><rect x="24.1" y="49.6" width="1.1" height=".9"/><rect x="35.3" y="39.6" width="1.2" height=".9"/><rect x="32.3" y="9.7" width="1.3" height=".9"/><rect x="37.9" y="33.6" width="1.1" height=".9"/><rect x="36.0" y="12.7" width="1.3" height=".9"/><rect x="27.2" y="13.1" width="0.9" height=".9"/><rect x="37.5" y="19.4" width="1.3" height=".9"/><rect x="42.8" y="33.2" width="1.0" height=".9"/><rect x="32.1" y="42.3" width="1.3" height=".9"/><rect x="35.1" y="40.4" width="0.8" height=".9"/><rect x="25.0" y="21.7" width="1.3" height=".9"/><rect x="28.3" y="36.8" width="0.7" height=".9"/><rect x="23.1" y="22.4" width="1.2" height=".9"/><rect x="36.7" y="41.9" width="0.9" height=".9"/></g><g fill="#3b82f6"><rect x="31" y="22" width="1.300" height="1.300"/><rect x="28" y="30" width="1.300" height="1.300"/><rect x="30.500" y="34" width="1.300" height="1.300"/><rect x="7" y="10.500" width="1.300" height="1.300"/><rect x="12.500" y="16.500" width="1.300" height="1.300"/></g></svg></div>
<span class="t" id="t35" style="left:208.20px;top:28.30px;font-size:27px;line-height:38px;color:#52525b;letter-spacing:0.217px;">Gaming bundle</span>
<span class="t" id="t36" style="left:440.50px;top:28.30px;font-size:27px;line-height:38px;color:#52525b;letter-spacing:0.200px;">Gaming</span>
<span class="t" id="t37" style="left:705.50px;top:28.30px;font-size:27px;line-height:38px;color:#52525b;letter-spacing:0.166px;">Webshop</span>
<span class="t" id="t38" style="left:966.50px;top:28.30px;font-size:27px;line-height:38px;color:#52525b;letter-spacing:0.001px;">1 variant</span>
<i class="sq" style="left:1226px;top:39px"></i>
<span class="t" id="t39" style="left:1257.00px;top:28.30px;font-size:27px;line-height:38px;color:#52525b;letter-spacing:0.375px;">Published</span>
</div>
<div class="row" style="top:533px;height:128px;border-bottom:0">
<span class="t" id="t40" style="left:48.00px;top:45.30px;font-size:27px;line-height:38px;color:#52525b;letter-spacing:0.530px;-webkit-text-stroke:0.4px #52525b;">1 — 2 of 2 results</span>
<span class="t" id="t41" style="left:1050.00px;top:45.30px;font-size:27px;line-height:38px;color:#52525b;letter-spacing:-0.273px;-webkit-text-stroke:0.4px #52525b;">1 of 1 pages</span>
<span class="t" id="t42" style="left:1261.00px;top:45.30px;font-size:27px;line-height:38px;color:#a1a1aa;letter-spacing:-0.667px;-webkit-text-stroke:0.4px #a1a1aa;">Prev</span>
<span class="t" id="t43" style="left:1381.00px;top:45.30px;font-size:27px;line-height:38px;color:#a1a1aa;letter-spacing:0.333px;-webkit-text-stroke:0.4px #a1a1aa;">Next</span>
</div>
</section>
<section class="card" style="left:450px;top:1171px;width:1486px;height:120px">
<span class="t" id="t44" style="left:47.00px;top:37.30px;font-size:33px;line-height:46px;color:#18181b;letter-spacing:1.143px;-webkit-text-stroke:0.5px #18181b;">Metadata</span>
<div class="pill" style="left:218.5px;top:40px;width:102px;height:40px;"><span class="t" id="t45" style="left:12.00px;top:0.60px;font-size:25px;line-height:35px;color:#52525b;letter-spacing:0.400px;-webkit-text-stroke:0.3px #52525b;">0 keys</span></div>
<svg class="ic" style="left:1395px;top:45px;color:#71717a" width="30" height="30" viewBox="0 0 30 30" fill="none" stroke="currentColor" stroke-width="2.8" stroke-linecap="round" stroke-linejoin="round"><path d="M12.600 7.300H7a3 3 0 0 0-3 3V22.900a3 3 0 0 0 3 3H19.500a3 3 0 0 0 3-3V17"/><path d="M14.200 15.600 26.100 3.500M17 3.500h9.100v9.100"/></svg>
</section>
<section class="card" style="left:450px;top:1315px;width:1486px;height:120px">
<span class="t" id="t46" style="left:48.50px;top:38.10px;font-size:33px;line-height:46px;color:#18181b;letter-spacing:-0.333px;-webkit-text-stroke:0.5px #18181b;">JSON</span>
<div class="pill" style="left:167px;top:40px;width:113px;height:40px;"><span class="t" id="t47" style="left:11.50px;top:0.60px;font-size:25px;line-height:35px;color:#52525b;letter-spacing:0.000px;-webkit-text-stroke:0.3px #52525b;">13 keys</span></div>
<svg class="ic" style="left:1395px;top:45px;color:#71717a" width="30" height="30" viewBox="0 0 30 30" fill="none" stroke="currentColor" stroke-width="2.8" stroke-linecap="round" stroke-linejoin="round"><path d="M12.600 7.300H7a3 3 0 0 0-3 3V22.900a3 3 0 0 0 3 3H19.500a3 3 0 0 0 3-3V17"/><path d="M14.200 15.600 26.100 3.500M17 3.500h9.100v9.100"/></svg>
</section>
</main>
<aside class="card" style="left:1968px;top:130px;width:880px;height:428px">
<div class="row hd" style="height:120px">
<span class="t" id="t48" style="left:47.50px;top:37.30px;font-size:33px;line-height:46px;color:#18181b;letter-spacing:0.572px;-webkit-text-stroke:0.5px #18181b;">Organize</span>
<svg class="ic" style="left:789.5px;top:45px;color:#52525b" width="30" height="30" viewBox="0 0 30 30" fill="none" stroke="currentColor" stroke-width="2.8" stroke-linecap="round" stroke-linejoin="round"><circle cx="5" cy="15" r="2.35" fill="currentColor" stroke="none"/><circle cx="15" cy="15" r="2.35" fill="currentColor" stroke="none"/><circle cx="25" cy="15" r="2.35" fill="currentColor" stroke="none"/></svg>
</div>
<div class="row" style="top:122px;height:200px">
<span class="t" id="t49" style="left:48.50px;top:32.80px;font-size:27px;line-height:38px;color:#52525b;letter-spacing:0.334px;-webkit-text-stroke:0.4px #52525b;">Path</span>
<svg class="ic" style="left:452px;top:32px;color:#60a5fa" width="30" height="30" viewBox="0 0 30 30" fill="none" stroke="currentColor" stroke-width="2.8" stroke-linecap="round" stroke-linejoin="round"><path d="M2.100 6a3 3 0 0 1 3-3h5.600q1.600 0 2.400 1.100l.8 1.100H24.800a3 3 0 0 1 3 3V24a3 3 0 0 1-3 3H5.100a3 3 0 0 1-3-3z" fill="#60a5fa" stroke="none"/></svg>
<span class="t" id="t50" style="left:508.00px;top:33.30px;font-size:27px;line-height:38px;color:#52525b;letter-spacing:0.530px;-webkit-text-stroke:0.4px #52525b;">Computer &amp; Tablets</span>
<svg class="ic" style="left:768px;top:44px;color:#52525b" width="11" height="16" viewBox="0 0 11 16" fill="none" stroke="currentColor" stroke-width="2.8" stroke-linecap="round" stroke-linejoin="round"><path d="M1.6 1.2 9.4 7.1a1.1 1.1 0 0 1 0 1.800L1.600 14.800A1 1 0 0 1 0 14V2A1 1 0 0 1 1.600 1.200z" fill="currentColor" stroke="none"/></svg>
<span class="t" id="t51" style="left:509.00px;top:81.00px;font-size:27px;line-height:38px;color:#52525b;letter-spacing:0.625px;-webkit-text-stroke:0.4px #52525b;">Desktop computers</span>
<svg class="ic" style="left:765.5px;top:92px;color:#52525b" width="11" height="16" viewBox="0 0 11 16" fill="none" stroke="currentColor" stroke-width="2.8" stroke-linecap="round" stroke-linejoin="round"><path d="M1.6 1.2 9.4 7.1a1.1 1.1 0 0 1 0 1.800L1.600 14.800A1 1 0 0 1 0 14V2A1 1 0 0 1 1.600 1.200z" fill="currentColor" stroke="none"/></svg>
<span class="t" id="t52" style="left:508.00px;top:130.30px;font-size:25px;line-height:35px;color:#52525b;letter-spacing:-0.250px;">Gaming PC</span>
</div>
<div class="row" style="top:324px;height:104px;border-bottom:0">
<span class="t" id="t53" style="left:48.00px;top:32.80px;font-size:27px;line-height:38px;color:#52525b;letter-spacing:0.572px;-webkit-text-stroke:0.4px #52525b;">Children</span>
<span class="t" id="t54" style="left:452.70px;top:32.30px;font-size:27px;line-height:38px;color:#52525b;letter-spacing:0.000px;transform:scaleX(1.3);transform-origin:0 50%;">-</span>
</div>
</aside>
</body></html>
